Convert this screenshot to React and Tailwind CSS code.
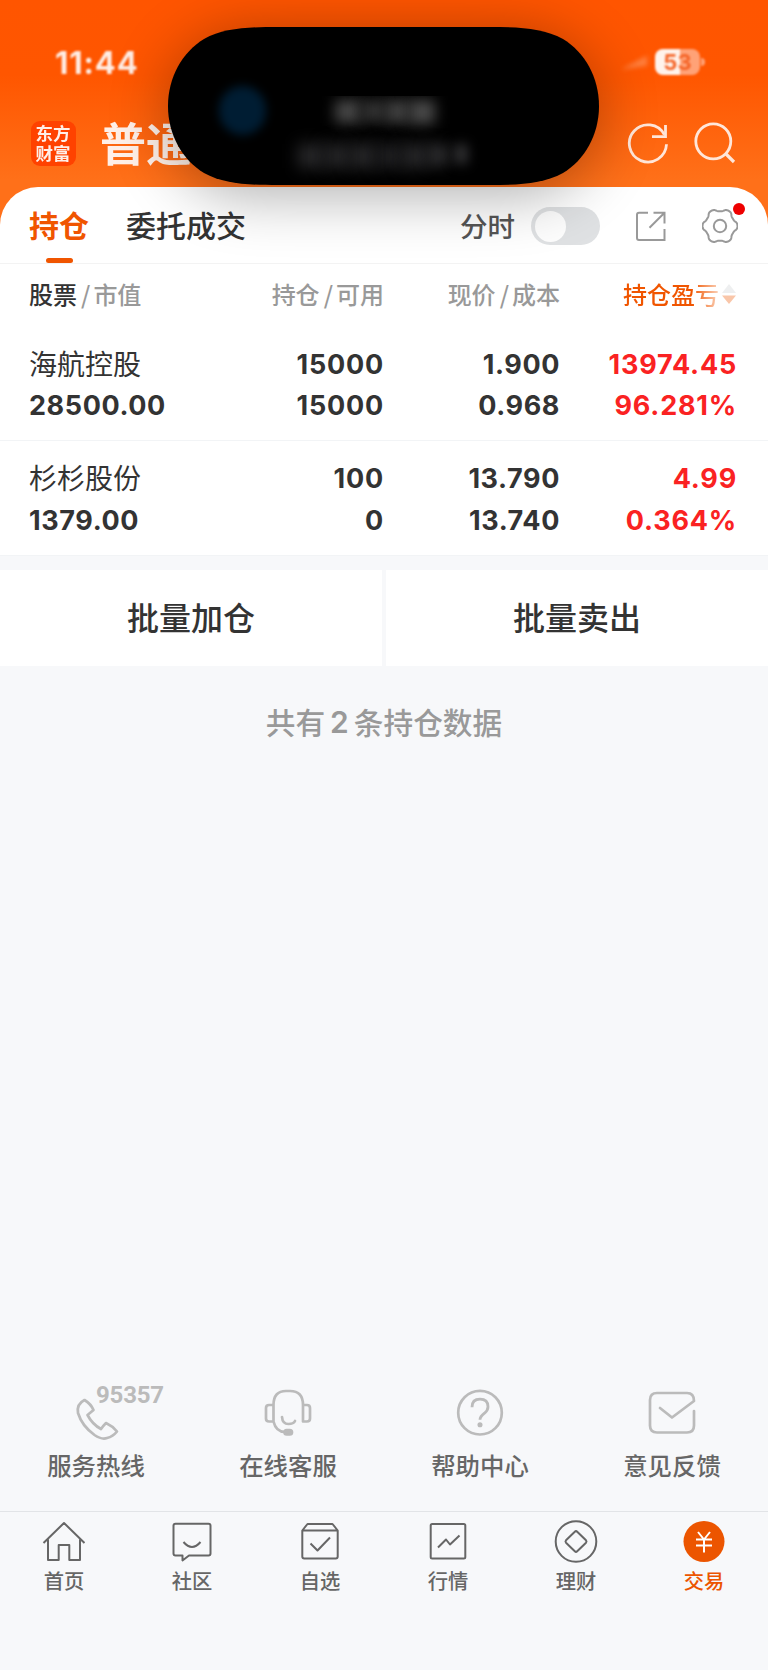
import React from "react";

const holdings = [
  { name: "海航控股", value: "28500.00", qty: "15000", usable: "15000", price: "1.900", cost: "0.968", profit: "13974.45", rate: "96.281%" },
  { name: "杉杉股份", value: "1379.00", qty: "100", usable: "0", price: "13.790", cost: "13.740", profit: "4.99", rate: "0.364%" },
];

const num = "font-['Inter','Noto_Sans_CJK_SC',sans-serif] font-bold text-[27px] leading-[41.5px]";

function StatusBar() {
  return (
    <div className="flex h-[125px] items-start justify-between pl-[55px] pr-[63px] pt-[45px] blur-[0.9px]">
      <div className="font-['Inter',sans-serif] text-[31px] font-bold leading-[35px] tracking-[0.9px] text-white/90">11:44</div>
      <div className="flex items-center gap-[5px] pt-[4px]">
        <svg width="32" height="24" viewBox="0 0 34 24" className="blur-[2px]">
          <path d="M3 20 L31 5 V16 Z" fill="#ffb48c" opacity="0.45" />
        </svg>
        <div className="flex items-center gap-[1px]">
          <div className="flex h-[26px] w-[45px] items-center justify-center rounded-[8px] bg-[linear-gradient(90deg,#fff3ec_55%,#ffa277_55%)] font-['Inter',sans-serif] text-[22px] font-bold leading-none text-[#f5662a]">53</div>
          <div className="h-[8px] w-[4px] rounded-r-full bg-[#ffa277]" />
        </div>
      </div>
    </div>
  );
}

function TitleBar() {
  return (
    <div className="flex h-[63px] pl-[31px] blur-[0.6px]">
      <div className="mt-[-4px] flex h-[45px] w-[45px] items-start justify-center rounded-[9px] bg-[#ff4200] pt-[2px]">
        <div className="w-[36px] break-all font-['Noto_Sans_CJK_SC',sans-serif] text-[17.5px] font-bold leading-[20px] text-[#ffefe8]">东方财富</div>
      </div>
      <div className="ml-[24px] mt-[-14px] w-[460px] font-['Noto_Sans_CJK_SC',sans-serif] text-[46px] font-bold leading-[60px] text-[#fff0e8]">普通</div>
      <svg width="44" height="44" viewBox="0 0 44 44" fill="none" stroke="#ffe6d9" strokeWidth="2.8" className="ml-[66px] mt-[-4px]">
        <path d="M38.3 13.6 A18.6 18.6 0 1 0 40.5 23.3" />
        <path d="M39.5 4 V15.7 H26" />
      </svg>
      <svg width="44" height="44" viewBox="0 0 44 44" fill="none" stroke="#ffe6d9" strokeWidth="2.8" className="ml-[23px] mt-[-4px]">
        <circle cx="20.3" cy="20.3" r="17.5" />
        <path d="M32.5 32.5 L41 41" strokeWidth="3.2" />
      </svg>
    </div>
  );
}

function Island() {
  return (
    <div className="absolute left-[168px] top-[27px] h-[158px] w-[431px] overflow-visible">
      <div className="absolute inset-x-[6px] inset-y-[4px] rounded-[75px] shadow-[0_8px_60px_6px_rgba(0,0,0,0.32)]" />
      <svg width="431" height="158" viewBox="0 0 431 158" className="absolute inset-0">
        <path d="M110 0 H321 C351 0 375 1 395 12 C416.500 25 431 50 431 79 C431 108 416.500 133 395 146 C375 157 351 158 321 158 H110 C80 158 56 157 36 146 C14.500 133 0 108 0 79 C0 50 14.500 25 36 12 C56 1 80 0 110 0 Z" fill="#000" />
      </svg>
      <div className="absolute left-[51px] top-[59px] h-[49px] w-[47px] rounded-full bg-[#001d33] blur-[5px]" />
      <div className="absolute left-[145px] top-[69px] flex h-[46px] w-[145px] gap-0 overflow-hidden px-[22px] pt-[4px]">
        <div className="h-[23px] w-[26px] bg-[#474747] blur-[7px]" />
        <div className="h-[22px] w-[24px] bg-[#333333] blur-[7px]" />
        <div className="h-[23px] w-[24px] bg-[#424242] blur-[7px]" />
        <div className="h-[24px] w-[26px] bg-[#4a4a4a] blur-[7px]" />
      </div>
      <div className="absolute left-[130px] top-[117px] flex">
        <div className="h-[24px] w-[26px] bg-[#28282a] blur-[8px]" />
        <div className="h-[24px] w-[26px] bg-[#262628] blur-[8px]" />
        <div className="h-[24px] w-[26px] bg-[#28282a] blur-[8px]" />
        <div className="h-[24px] w-[26px] bg-[#202022] blur-[8px]" />
        <div className="h-[24px] w-[26px] bg-[#28282a] blur-[8px]" />
        <div className="h-[22px] w-[20px] bg-[#2c2c2e] blur-[7px]" />
        <div className="ml-[6px] h-[20px] w-[14px] bg-[#303032] blur-[6px]" />
      </div>
    </div>
  );
}

// Six-toothed cog outline: the radius swings between valley and flat tooth top.
const gearPath =
  "M" +
  Array.from({ length: 120 }, (_, i) => {
    const a = (i / 120) * Math.PI * 2;
    const r = 16.1 + 1.35 * (Math.tanh(1.5 * Math.cos(6 * a)) / Math.tanh(1.5));
    return (18 + r * Math.cos(a)).toFixed(2) + " " + (18 + r * Math.sin(a)).toFixed(2);
  }).join("L") +
  "Z";

function Tabs() {
  return (
    <div className="flex h-[77px] items-start border-b border-[#f3f3f3] pl-[29px] pr-[28px]">
      <div className="flex w-[60px] flex-col items-center">
        <div className="mt-[15px] text-[30px] font-bold leading-[44px] text-[#f05500]">持仓</div>
        <div className="mt-[12px] h-[5px] w-[27px] rounded-[3px] bg-[#f05500]" />
      </div>
      <div className="ml-[37px] mt-[15px] text-[30px] font-medium leading-[44px] text-[#333]">委托成交</div>
      <div className="ml-[214px] mt-[16px] text-[27.5px] font-medium leading-[44px] text-[#555]">分时</div>
      <div className="ml-[16px] mt-[20px] flex h-[38px] w-[69px] items-center rounded-full bg-[#dfe1e3] pl-[4px]">
        <div className="h-[31px] w-[31px] rounded-full bg-[#fdfdfd]" />
      </div>
      <svg width="32" height="32" viewBox="0 0 32 32" fill="none" stroke="#999" strokeWidth="2" className="ml-[35px] mt-[23px]">
        <path d="M13 2.7 H4 Q2 2.7 2 4.7 V28 Q2 30 4 30 H29.500 V19" />
        <path d="M18.5 2.7 H29.5 V13.5 M29.5 2.7 L14.5 17.8" />
      </svg>
      <div className="relative ml-[35px] mt-[21px]">
        <svg width="36" height="36" viewBox="0 0 36 36" fill="none" stroke="#999" strokeWidth="2" strokeLinejoin="round">
          <path d={gearPath} />
          <circle cx="18" cy="18" r="6.2" />
        </svg>
        <div className="absolute left-[31px] top-[-5px] h-[12px] w-[12px] rounded-full bg-[#ee0000]" />
      </div>
    </div>
  );
}

const cols = "grid grid-cols-[170px_185px_176px_177px] pl-[29px]";

function ColumnHeads() {
  return (
    <div className={cols + " h-[62.5px] pt-[12px] text-[24px] font-medium leading-[36px] text-[#999]"}>
      <div className="whitespace-nowrap"><span className="text-[#333]">股票</span><span className="pl-[4px] pr-[3px]">/</span>市值</div>
      <div className="text-right">持仓<span className="pl-[4px] pr-[3px]">/</span>可用</div>
      <div className="text-right">现价<span className="pl-[4px] pr-[3px]">/</span>成本</div>
      <div className="flex h-[36px] items-center justify-end gap-[2px]">
        <span className="bg-[linear-gradient(90deg,#f05500_72%,#fbd3bb_100%)] bg-clip-text text-transparent">持仓盈亏</span>
        <svg width="16" height="22" viewBox="0 0 16 22">
          <path d="M8 1 L15 10 H1 Z" fill="#eeeff0" />
          <path d="M8 21 L15 12.5 H1 Z" fill="#f9c6a9" />
        </svg>
      </div>
    </div>
  );
}

function Holding({ row }) {
  return (
    <div className={cols + " border-b border-[#f2f4f6] h-[114.5px] pt-[17px] text-[#333]"}>
      <div className="whitespace-nowrap">
        <div className="mt-[-2px] text-[28px] leading-[43.5px]">{row.name}</div>
        <div className={num + " tracking-[0.6px]"}>{row.value}</div>
      </div>
      <div className={num + " text-right tracking-[0.8px]"}><div>{row.qty}</div><div>{row.usable}</div></div>
      <div className={num + " text-right tracking-[0.6px]"}><div>{row.price}</div><div>{row.cost}</div></div>
      <div className={num + " text-right tracking-[0.8px] text-[#fa2222]"}><div>{row.profit}</div><div>{row.rate}</div></div>
    </div>
  );
}

const g = { fill: "none", stroke: "#bbb", strokeWidth: 2.7, strokeLinecap: "round", strokeLinejoin: "round" };

function Services() {
  return (
    <div className="grid h-[127px] grid-cols-4 text-[24.4px] font-medium leading-[36px] text-[#666]">
      <div className="flex flex-col items-center">
        <div className="relative">
          <svg width="96" height="62" viewBox="0 0 96 62" {...g}>
            <path d="M36.5 16 Q28.5 20 30 29 Q34 42 46.5 51 Q54 56 59 54 Q65 52.5 69 47.5 Q64.5 42 58 39 Q55.5 41.5 53 45 Q44.5 40.5 39.5 31 Q42 29 45.5 26 Q43 20 36.5 16 Z" />
          </svg>
          <span className="absolute left-[48px] top-[-2px] font-['Roboto',sans-serif] text-[24px] font-bold leading-[26px] tracking-[-0.2px] text-[#bbb]">95357</span>
        </div>
        <span className="mt-[1px]">服务热线</span>
      </div>
      <div className="flex flex-col items-center">
        <svg width="52" height="62" viewBox="0 0 52 62" {...g}>
          <path d="M11.5 21 Q11.5 7 24 7 H28 Q41 7 41 21 V37.5 H45 Q48 37.5 48 34.5 V24 Q48 21 45 21 H41 M11.5 21 H7 Q4 21 4 24 V34.5 Q4 37.5 7 37.5 H11.5 V21 M11.5 37.5 Q14 48 23 48" />
          <path d="M20 33 Q20.500 40 26.500 40 Q31.500 40 33 37" />
          <rect x="22.5" y="46" width="7.5" height="4.5" rx="2.2" fill="#bbb" />
        </svg>
        <span className="mt-[1px]">在线客服</span>
      </div>
      <div className="flex flex-col items-center">
        <svg width="52" height="62" viewBox="0 0 52 62" {...g}>
          <circle cx="26" cy="28.7" r="21.8" />
          <path d="M18 23.2 Q18 15.2 26 15.2 Q34 15.2 34 22.7 Q34 26.2 30.5 29.2 Q26 32.700 26 35.7" strokeWidth="2.8" strokeLinecap="butt" />
          <circle cx="26" cy="40.7" r="1.2" fill="#bbb" />
        </svg>
        <span className="mt-[1px]">帮助中心</span>
      </div>
      <div className="flex flex-col items-center">
        <svg width="52" height="62" viewBox="0 0 52 62" {...g}>
          <path d="M48 27 V41.500 Q48 48.500 41 48.500 H11 Q4 48.500 4 41.500 V16 Q4 9 11 9 H41 Q48 9 48 17 L26 33.500 L14 24" />
        </svg>
        <span className="mt-[1px]">意见反馈</span>
      </div>
    </div>
  );
}

const icons = {
  home: <path d="M1.5 23 L22 3 L42.5 23 M6 19.5 V40 H16.7 V25 H27.3 V40 H38 V19.5" />,
  chat: <><path d="M5.5 3.7 H38.5 Q40.5 3.7 40.5 5.7 V33.5 Q40.5 35.5 38.5 35.5 H19 L12.5 40.5 V35.5 H5.5 Q3.5 35.5 3.5 33.5 V5.7 Q3.5 3.7 5.5 3.7 Z" /><path d="M13.5 22 Q22 32 30.5 22" /></>,
  pick: <><path d="M4.3 10.5 L9.5 4 H34.5 L39.7 10.5 V36.5 Q39.7 38.5 37.7 38.5 H6.3 Q4.3 38.5 4.3 36.5 Z M4.3 10.5 H39.7" /><path d="M12.5 23.5 L19.5 30.5 L32 17.5" /></>,
  chart: <><rect x="4.7" y="4" width="34.6" height="34.5" rx="1.5" /><path d="M12 27.5 L20 19.5 L24 24.5 L33.5 15.5" /></>,
  money: <><circle cx="22" cy="21.5" r="20.3" /><path d="M20.8 11.7 Q22 10.5 23.2 11.7 L32 20.3 Q33 21.5 32 22.7 L23.2 31.3 Q22 32.5 20.8 31.3 L12 22.7 Q11 21.5 12 20.3 Z" /></>,
  trade: <><circle cx="22" cy="21.5" r="20.5" fill="#ec5500" stroke="none" /><path d="M16 12 L22 19.5 L28 12 M22 19.5 V32.5 M14 19.5 H30 M14 25.5 H30" stroke="#fff" /></>,
};

const nav = [
  ["home", "首页"],
  ["chat", "社区"],
  ["pick", "自选"],
  ["chart", "行情"],
  ["money", "理财"],
  ["trade", "交易"],
];

export default function App() {
  return (
    <div className="relative flex h-[1670px] w-[768px] flex-col overflow-hidden bg-[#f7f8fa] font-['Noto_Sans_CJK_SC',sans-serif]">
      <header className="h-[240px] shrink-0 bg-[linear-gradient(180deg,#ff5500_0px,#ff5600_75px,#ff7019_180px)]">
        <StatusBar />
        <TitleBar />
      </header>
      <Island />
      <main className="mt-[-53px] rounded-t-[38px] bg-white">
        <Tabs />
        <ColumnHeads />
        {holdings.map((row) => <Holding key={row.name} row={row} />)}
      </main>
      <div className="mt-[14.5px] grid h-[96px] shrink-0 grid-cols-2 gap-[4px] text-center text-[32px] font-medium leading-[93px] text-[#333]">
        <div className="bg-white">批量加仓</div>
        <div className="bg-white">批量卖出</div>
      </div>
      <div className="mt-[32px] flex justify-center gap-[5px] text-[29.7px] font-medium leading-[48px] text-[#999]">
        <span>共有</span>
        <span className="font-['Inter',sans-serif] text-[30px] font-semibold">2</span>
        <span>条持仓数据</span>
      </div>
      <div className="flex-1" />
      <Services />
      <nav className="grid h-[159px] shrink-0 grid-cols-6 border-t border-[#e2e4e7] pt-[8px] text-[20.3px] font-medium leading-[30px] text-[#666]">
        {nav.map(([key, label]) => (
          <div key={key} className={key === "trade" ? "flex flex-col items-center text-[#ec5500]" : "flex flex-col items-center"}>
            <svg width="44" height="44" viewBox="0 0 44 44" fill="none" stroke="#666" strokeWidth="2" strokeLinejoin="round">{icons[key]}</svg>
            <span className="mt-[1px]">{label}</span>
          </div>
        ))}
      </nav>
    </div>
  );
}
